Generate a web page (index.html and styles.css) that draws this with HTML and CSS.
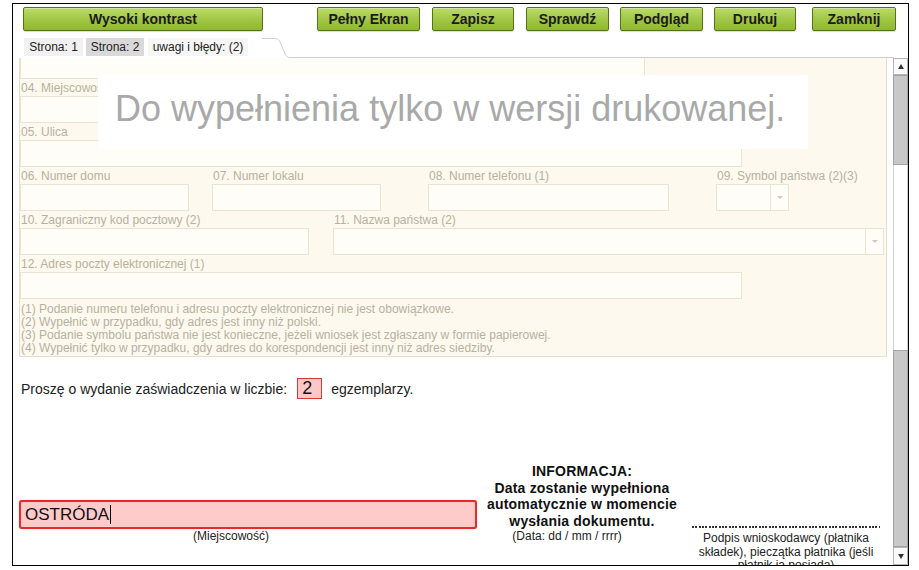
FILE: index.html
```html
<!DOCTYPE html>
<html lang="pl">
<head>
<meta charset="utf-8">
<title>Formularz</title>
<link rel="stylesheet" href="styles.css">
</head>
<body>
<div class="frame">
  <div class="toolbar">
    <button class="btn btn-contrast">Wysoki kontrast</button>
    <button class="btn btn-full">Pełny Ekran</button>
    <button class="btn btn-save">Zapisz</button>
    <button class="btn btn-check">Sprawdź</button>
    <button class="btn btn-preview">Podgląd</button>
    <button class="btn btn-print">Drukuj</button>
    <button class="btn btn-close">Zamknij</button>
  </div>
  <div class="tabs">
    <span class="tab tab-1">Strona: 1</span>
    <span class="tab tab-2">Strona: 2</span>
    <span class="tab tab-3">uwagi i błędy: (2)</span>
    <svg class="tab-curve" width="28" height="20" viewBox="0 0 28 20"><path d="M0 0.5 H13 C16 0.5 17 2 18.5 5 L23 15.5 C24.5 18.6 25 19.5 28 19.5" fill="none" stroke="#cfcfcf" stroke-width="1"/></svg>
    <div class="tab-line"></div>
  </div>
  <div class="content">
    <div class="page">
      <div class="panel">
        <div class="field field-cut w625"></div>
        <div class="row">
          <div class="col w722"><div class="lbl">04. Miejscowość</div><div class="field"></div></div>
        </div>
        <div class="row">
          <div class="col w722"><div class="lbl">05. Ulica</div><div class="field"></div></div>
        </div>
        <div class="row">
          <div class="col w169"><div class="lbl">06. Numer domu</div><div class="field"></div></div>
          <div class="col w169 ml23"><div class="lbl">07. Numer lokalu</div><div class="field"></div></div>
          <div class="col w241 ml47"><div class="lbl">08. Numer telefonu (1)</div><div class="field"></div></div>
          <div class="col w73 ml47"><div class="lbl">09. Symbol państwa (2)(3)</div><div class="field select"><span class="sel-val"></span><span class="sel-arrow"></span></div></div>
        </div>
        <div class="row">
          <div class="col w289"><div class="lbl">10. Zagraniczny kod pocztowy (2)</div><div class="field"></div></div>
          <div class="col w551 ml24"><div class="lbl">11. Nazwa państwa (2)</div><div class="field select"><span class="sel-val"></span><span class="sel-arrow"></span></div></div>
        </div>
        <div class="row">
          <div class="col w722"><div class="lbl">12. Adres poczty elektronicznej (1)</div><div class="field"></div></div>
        </div>
        <div class="notes">
          <div>(1) Podanie numeru telefonu i adresu poczty elektronicznej nie jest obowiązkowe.</div>
          <div>(2) Wypełnić w przypadku, gdy adres jest inny niż polski.</div>
          <div>(3) Podanie symbolu państwa nie jest konieczne, jeżeli wniosek jest zgłaszany w formie papierowej.</div>
          <div>(4) Wypełnić tylko w przypadku, gdy adres do korespondencji jest inny niż adres siedziby.</div>
        </div>
        <div class="overlay">Do wypełnienia tylko w wersji drukowanej.</div>
      </div>
      <div class="copies">
        <span>Proszę o wydanie zaświadczenia w liczbie:</span>
        <span class="copies-box">2</span>
        <span>egzemplarzy.</span>
      </div>
      <div class="sign-row">
        <div class="place">
          <div class="place-input">OSTRÓDA<span class="caret"></span></div>
          <div class="caption place-caption">(Miejscowość)</div>
        </div>
        <div class="info">
          <div class="info-bold">INFORMACJA:<br>Data zostanie wypełniona<br>automatycznie w momencie<br>wysłania dokumentu.</div>
          <div class="caption info-date">(Data: dd / mm / rrrr)</div>
        </div>
        <div class="sig">
          <div class="dots"></div>
          <div class="sig-text">Podpis wnioskodawcy (płatnika składek), pieczątka płatnika (jeśli płatnik ją posiada)</div>
        </div>
      </div>
    </div>
    <div class="scrollbar">
      <div class="sb-btn sb-up"><span class="tri-up"></span></div>
      <div class="sb-thumb"></div>
      <div class="sb-track"></div>
      <div class="sb-thumb sb-lower"></div>
      <div class="sb-btn sb-down"><span class="tri-down"></span></div>
    </div>
  </div>
</div>
</body>
</html>
```

FILE: styles.css
```css
* { box-sizing: border-box; }

html, body {
  margin: 0;
  padding: 0;
  background: #ffffff;
  font-family: "Liberation Sans", Arial, sans-serif;
  color: #222222;
}

.frame {
  margin: 3px 0 0 12px;
  width: 897px;
  height: 563px;
  border: 1px solid #000000;
  overflow: hidden;
  background: #ffffff;
}

/* toolbar */
.toolbar {
  display: flex;
  align-items: flex-start;
  height: 34px;
  padding: 3px 0 0 10px;
}

.btn {
  height: 24px;
  padding: 0;
  border: 1px solid #56721b;
  border-radius: 2px;
  background: linear-gradient(#bcdb6a 0%, #a4c94a 45%, #8fb72e 100%);
  box-shadow: inset 0 1px 0 rgba(255, 255, 255, 0.35), 0 1px 1px rgba(0, 0, 0, 0.15);
  font: bold 14px "Liberation Sans", Arial, sans-serif;
  color: #1b1b1b;
  text-align: center;
  line-height: 20px;
}

.btn-contrast { width: 240px; }
.btn-full { width: 103px; margin-left: 54px; }
.btn-save { width: 82px; margin-left: 12px; }
.btn-check { width: 83px; margin-left: 12px; }
.btn-preview { width: 83px; margin-left: 11px; }
.btn-print { width: 82px; margin-left: 11px; }
.btn-close { width: 84px; margin-left: 16px; }

/* tabs */
.tabs {
  display: flex;
  align-items: flex-start;
  height: 20px;
  padding-left: 11px;
}

.tab {
  height: 18px;
  line-height: 18px;
  font-size: 12px;
  color: #222222;
  text-align: center;
  white-space: nowrap;
}

.tab-1 { width: 59px; background: #f1f1f1; margin-right: 3px; }
.tab-2 { width: 58px; background: #d9d9d9; margin-right: 4px; }
.tab-3 { width: 100px; background: #f6f6f6; }

.tab-curve { display: block; margin-left: 14px; }

.tab-line {
  flex: 1;
  height: 20px;
  border-bottom: 1px solid #cfcfcf;
  margin-right: 14px;
}

/* content */
.content {
  display: flex;
  height: 507px;
}

.page {
  width: 880px;
  padding-left: 6px;
  overflow: hidden;
}

.panel {
  position: relative;
  width: 868px;
  background: #fdf9ee;
  border: 1px solid #e6dfcb;
  border-top: none;
  padding-bottom: 1px;
}

.field {
  height: 27px;
  border: 1px solid #ebe4d1;
  background: #fffdf7;
}

.field-cut {
  height: 21px;
  border-top: none;
}

.row {
  display: flex;
  margin-top: 2px;
}

.col { flex: none; }

.lbl {
  height: 15px;
  line-height: 15px;
  font-size: 12px;
  color: #b7b1a1;
  padding-left: 1px;
  white-space: nowrap;
}

.w625 { width: 625px; }
.w722 { width: 722px; }
.w169 { width: 169px; }
.w241 { width: 241px; }
.w73 { width: 73px; }
.w289 { width: 289px; }
.w551 { width: 551px; }
.ml23 { margin-left: 23px; }
.ml24 { margin-left: 24px; }
.ml47 { margin-left: 47px; }

.select {
  display: flex;
}

.sel-val { flex: 1; }

.sel-arrow {
  width: 18px;
  border-left: 1px solid #ebe4d1;
  display: flex;
  align-items: center;
  justify-content: center;
}

.sel-arrow::after {
  content: "";
  border-left: 3px solid transparent;
  border-right: 3px solid transparent;
  border-top: 3px solid #cfcac0;
}

.notes {
  margin-top: 2px;
  padding: 2px 0 0 1px;
  font-size: 12px;
  line-height: 13px;
  color: #b7b1a1;
}

.overlay {
  position: absolute;
  left: 78px;
  top: 17px;
  width: 710px;
  height: 74px;
  background: #ffffff;
  padding: 13px 0 0 17px;
  font-size: 36px;
  line-height: 42px;
  color: #a9a9a9;
  white-space: nowrap;
}

/* copies */
.copies {
  display: flex;
  align-items: center;
  height: 21px;
  margin-top: 21px;
  padding-left: 2px;
  font-size: 14px;
  color: #222222;
}

.copies-box {
  width: 25px;
  height: 21px;
  margin: 0 9px 0 10px;
  padding-left: 4px;
  border: 1px solid #d23a3a;
  background: #ffc8c8;
  font-size: 18px;
  line-height: 19px;
  color: #111111;
}

/* signature row */
.sign-row {
  display: flex;
  align-items: flex-start;
  margin-top: 56px;
}

.place {
  width: 458px;
  padding-top: 45px;
}

.place-input {
  height: 29px;
  border: 2px solid #e22b2b;
  border-radius: 3px;
  background: #ffcaca;
  padding-left: 4px;
  font-size: 17px;
  line-height: 25px;
  color: #111111;
  box-shadow: 0 0 1px rgba(200, 0, 0, 0.5);
}

.caret {
  display: inline-block;
  width: 1px;
  height: 19px;
  background: #000000;
  vertical-align: -4px;
  margin-left: 1px;
}

.caption {
  font-size: 12px;
  line-height: 15px;
  color: #222222;
}

.place-caption {
  text-align: center;
  padding-right: 34px;
}

.info {
  width: 210px;
  padding-top: 8px;
  text-align: center;
}

.info-bold {
  font-weight: bold;
  font-size: 14px;
  line-height: 16.5px;
  letter-spacing: 0.2px;
  color: #111111;
}

.info-date {
  padding-right: 30px;
}

.sig {
  width: 188px;
  margin-left: 5px;
  padding-top: 71px;
}

.dots {
  height: 2px;
  background-image: linear-gradient(to right, #333 0 2px, transparent 2px 3px, #333 3px 5px, transparent 5px 7px, #333 7px 9px, transparent 9px 10px);
  background-size: 10px 2px;
}

.sig-text {
  margin-top: 4px;
  font-size: 12px;
  line-height: 13.5px;
  text-align: center;
  color: #222222;
}

/* scrollbar */
.scrollbar {
  width: 15px;
  display: flex;
  flex-direction: column;
}

.sb-btn {
  border: 1px solid #b5b5b5;
  background: #fafafa;
  display: flex;
  align-items: center;
  justify-content: center;
}

.sb-up { height: 17px; }
.sb-down { height: 18px; }

.tri-up {
  border-left: 3px solid transparent;
  border-right: 3px solid transparent;
  border-bottom: 5px solid #333333;
}

.tri-down {
  border-left: 3px solid transparent;
  border-right: 3px solid transparent;
  border-top: 5px solid #333333;
}

.sb-thumb {
  height: 90px;
  background: #c8c8c8;
  border: 1px solid #a3a3a3;
}

.sb-track {
  height: 185px;
  background: #ffffff;
  border-left: 1px solid #d0d0d0;
  border-right: 1px solid #d0d0d0;
}

.sb-lower { height: 197px; }
```
